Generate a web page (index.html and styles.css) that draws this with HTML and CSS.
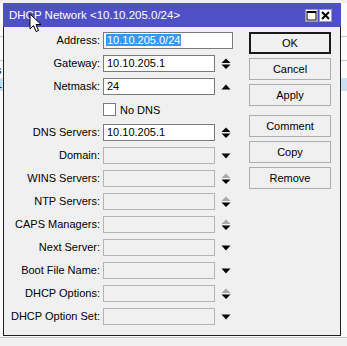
FILE: index.html
```html
<!DOCTYPE html>
<html>
<head>
<meta charset="utf-8">
<link rel="stylesheet" href="styles.css">
</head>
<body>
<div class="desktop">
  <div class="behind">
    <div class="bg-line l1"></div>
    <div class="bg-line l2"></div>
    <div class="bg-sel"></div>
    <div class="bg-text t1">s</div>
    <div class="bg-text t2">1</div>
  </div>
  <div class="window">
    <div class="titlebar">
      <span class="title">DHCP Network &lt;10.10.205.0/24&gt;</span>
      <div class="tbtns">
        <span class="tbtn"><svg width="11" height="11" viewBox="0 0 11 11"><rect x="1" y="1.5" width="9" height="8.5" fill="none" stroke="#000" stroke-width="1"/><rect x="1" y="1" width="9" height="2" fill="#000"/></svg></span>
        <span class="tbtn"><svg width="11" height="11" viewBox="0 0 11 11"><path d="M2 2 L9 9 M9 2 L2 9" stroke="#000" stroke-width="2"/></svg></span>
      </div>
    </div>
    <div class="body">
      <div class="form">
        <label class="lbl">Address:</label>
        <div class="field wide on"><span class="sel">10.10.205.0/24</span></div>

        <label class="lbl">Gateway:</label>
        <div class="field on">10.10.205.1</div>
        <div class="arr"><svg width="10" height="12" viewBox="0 0 10 12"><path d="M0.5 5 L5 0.5 L9.5 5 Z" fill="#000"/><path d="M0.5 6.5 L9.5 6.5 L5 11 Z" fill="#000"/></svg></div>

        <label class="lbl">Netmask:</label>
        <div class="field on">24</div>
        <div class="arr"><svg width="10" height="12" viewBox="0 0 10 12"><path d="M0.5 8.5 L5 3.5 L9.5 8.5 Z" fill="#000"/></svg></div>

        <div class="lbl"></div>
        <div class="check"><span class="box"></span><span>No DNS</span></div>

        <label class="lbl">DNS Servers:</label>
        <div class="field on">10.10.205.1</div>
        <div class="arr"><svg width="10" height="12" viewBox="0 0 10 12"><path d="M0.5 5 L5 0.5 L9.5 5 Z" fill="#000"/><path d="M0.5 6.5 L9.5 6.5 L5 11 Z" fill="#000"/></svg></div>

        <label class="lbl">Domain:</label>
        <div class="field"></div>
        <div class="arr"><svg width="10" height="12" viewBox="0 0 10 12"><path d="M0.5 3.5 L9.5 3.5 L5 8.5 Z" fill="#000"/></svg></div>

        <label class="lbl">WINS Servers:</label>
        <div class="field"></div>
        <div class="arr"><svg width="10" height="12" viewBox="0 0 10 12"><path d="M0.5 5 L5 0.5 L9.5 5 Z" fill="#a8a8a8"/><path d="M0.5 6.5 L9.5 6.5 L5 11 Z" fill="#000"/></svg></div>

        <label class="lbl">NTP Servers:</label>
        <div class="field"></div>
        <div class="arr"><svg width="10" height="12" viewBox="0 0 10 12"><path d="M0.5 5 L5 0.5 L9.5 5 Z" fill="#a8a8a8"/><path d="M0.5 6.5 L9.5 6.5 L5 11 Z" fill="#000"/></svg></div>

        <label class="lbl">CAPS Managers:</label>
        <div class="field"></div>
        <div class="arr"><svg width="10" height="12" viewBox="0 0 10 12"><path d="M0.5 5 L5 0.5 L9.5 5 Z" fill="#a8a8a8"/><path d="M0.5 6.5 L9.5 6.5 L5 11 Z" fill="#000"/></svg></div>

        <label class="lbl">Next Server:</label>
        <div class="field"></div>
        <div class="arr"><svg width="10" height="12" viewBox="0 0 10 12"><path d="M0.5 3.5 L9.5 3.5 L5 8.5 Z" fill="#000"/></svg></div>

        <label class="lbl">Boot File Name:</label>
        <div class="field"></div>
        <div class="arr"><svg width="10" height="12" viewBox="0 0 10 12"><path d="M0.5 3.5 L9.5 3.5 L5 8.5 Z" fill="#000"/></svg></div>

        <label class="lbl">DHCP Options:</label>
        <div class="field"></div>
        <div class="arr"><svg width="10" height="12" viewBox="0 0 10 12"><path d="M0.5 5 L5 0.5 L9.5 5 Z" fill="#a8a8a8"/><path d="M0.5 6.5 L9.5 6.5 L5 11 Z" fill="#000"/></svg></div>

        <label class="lbl">DHCP Option Set:</label>
        <div class="field"></div>
        <div class="arr"><svg width="10" height="12" viewBox="0 0 10 12"><path d="M0.5 3.5 L9.5 3.5 L5 8.5 Z" fill="#000"/></svg></div>
      </div>
      <div class="buttons">
        <div class="group">
          <button class="btn default">OK</button>
          <button class="btn">Cancel</button>
          <button class="btn">Apply</button>
        </div>
        <div class="group">
          <button class="btn">Comment</button>
          <button class="btn">Copy</button>
          <button class="btn">Remove</button>
        </div>
      </div>
    </div>
  </div>
  <svg class="cursor" width="14" height="22" viewBox="0 0 14 22"><path d="M1 1 L1 16 L4.5 12.5 L7 18.5 L9.5 17.5 L7 11.5 L12 11.5 Z" fill="#fff" stroke="#000" stroke-width="1"/></svg>
</div>
</body>
</html>
```
FILE: styles.css
```css
html, body {
  margin: 0;
  padding: 0;
}
body {
  width: 347px;
  height: 346px;
  background: #f0f0f0;
  font-family: "Liberation Sans", Arial, sans-serif;
  font-size: 11px;
  color: #000;
  overflow: hidden;
}
.desktop {
  position: relative;
  width: 347px;
  height: 346px;
}
.behind {
  position: absolute;
  left: 0;
  top: 3px;
  width: 347px;
  height: 334px;
  background: #fbfbfb;
  border-bottom: 1px solid #c8c8c8;
}
.bg-line {
  position: absolute;
  left: 0;
  right: 0;
  height: 1px;
  background: #c8c8c8;
}
.l1 { top: 33px; }
.l2 { top: 57px; }
.bg-sel {
  position: absolute;
  left: 0;
  right: 0;
  top: 75px;
  height: 13px;
  background: #cce0f4;
}
.bg-text {
  position: absolute;
  left: -4px;
  font-size: 11px;
}
.t1 { top: 61px; }
.t2 { top: 75px; }
.window {
  position: absolute;
  left: 3px;
  top: 3px;
  width: 338px;
  height: 333px;
  box-sizing: border-box;
  border: 1px solid #1e1e1e;
  border-top: none;
  background: #f0f0f0;
  display: flex;
  flex-direction: column;
}
.titlebar {
  height: 24px;
  margin: 0 -1px;
  background: #5050c6;
  display: flex;
  align-items: center;
  justify-content: space-between;
  padding: 0 9px 0 6px;
}
.title {
  color: #fff;
  font-size: 11.5px;
}
.tbtns {
  display: flex;
  gap: 1px;
}
.tbtn {
  width: 13px;
  height: 13px;
  background: #fff;
  border: 1px solid #9a9ab8;
  box-sizing: border-box;
  display: flex;
  align-items: center;
  justify-content: center;
}
.tbtn svg { display: block; }
.body {
  flex: 1;
  display: flex;
  padding: 5px 9px 0 0;
}
.form {
  display: grid;
  grid-template-columns: 96px 112px 16px;
  grid-auto-rows: 17px;
  column-gap: 3px;
  row-gap: 6px;
  align-items: center;
  align-content: start;
}
.lbl {
  text-align: right;
  white-space: nowrap;
  line-height: 17px;
  padding-right: 0;
}
.field {
  height: 17px;
  box-sizing: border-box;
  border: 1px solid #b4b4b4;
  background: #f0f0f0;
  line-height: 15px;
  padding-left: 3px;
  white-space: nowrap;
  overflow: hidden;
}
.field.on {
  background: #fff;
  border-color: #7a7a7a;
}
.field.wide {
  grid-column: 2 / span 2;
  width: 130px;
  padding-left: 2px;
}
.sel {
  background: #3399ff;
  color: #fff;
  padding: 0 1px;
}
.arr {
  display: flex;
  justify-content: center;
  align-items: center;
  height: 17px;
}
.arr svg { display: block; }
.check {
  grid-column: 2 / span 2;
  display: flex;
  align-items: center;
  gap: 4px;
}
.box {
  width: 13px;
  height: 13px;
  box-sizing: border-box;
  border: 1px solid #7a7a7a;
  background: #fff;
}
.buttons {
  margin-left: auto;
  display: flex;
  flex-direction: column;
  gap: 9px;
}
.group {
  display: flex;
  flex-direction: column;
  gap: 4px;
}
.btn {
  width: 82px;
  height: 22px;
  box-sizing: border-box;
  border: 1px solid #adadad;
  background: #f0f0f0;
  font-family: "Liberation Sans", Arial, sans-serif;
  font-size: 11px;
  color: #000;
  padding: 0;
}
.btn.default {
  border: 2px solid #1a1a1a;
}
.cursor {
  position: absolute;
  left: 29px;
  top: 13px;
}
```
